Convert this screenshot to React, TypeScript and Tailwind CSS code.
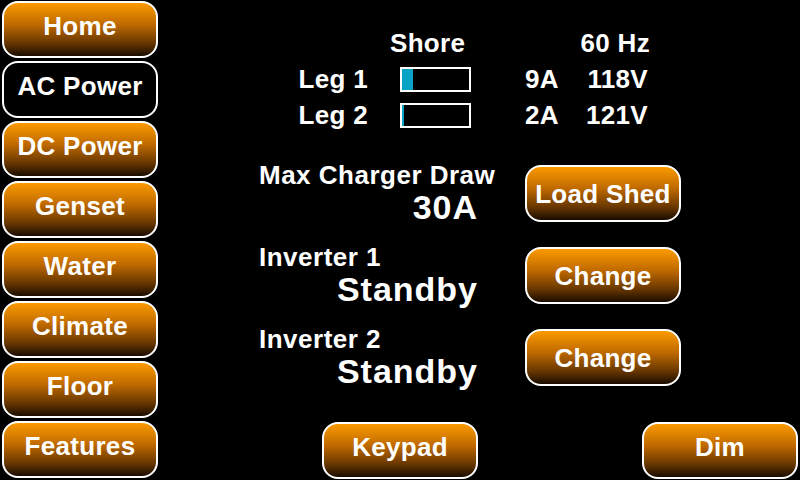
import React from 'react'

const font = { fontFamily: '"Liberation Sans", Arial, sans-serif' }

const navItems = ['Home', 'AC Power', 'DC Power', 'Genset', 'Water', 'Climate', 'Floor', 'Features']

function PillButton({ label, active = false, lift = true }: { label: string; active?: boolean; lift?: boolean }) {
  const base =
    'w-[156px] h-[57px] rounded-[16px] border-2 border-white flex items-center justify-center text-white font-bold text-[26px] tracking-[0.3px]'
  return (
    <div
      className={
        active
          ? `${base} bg-black`
          : `${base} bg-[linear-gradient(to_bottom,#fb9a00_0%,#c06a00_40%,#6a3800_75%,#1a0c00_100%)]`
      }
    >
      <span className={lift ? '-mt-[6px]' : 'mt-[2px]'}>{label}</span>
    </div>
  )
}

function LegBar({ pct }: { pct: number }) {
  return (
    <div className="ml-[32px] w-[71px] h-[25px] border-2 border-white bg-black">
      <div className="h-full bg-[#0aa3c6]" style={{ width: `${pct}%` }} />
    </div>
  )
}

function StatusRow({ label, value, action }: { label: string; value: string; action: string }) {
  return (
    <div className="flex items-center h-[57px]">
      <div className="w-[219px] flex flex-col -mt-[2px]">
        <div className="whitespace-nowrap text-[26px] font-bold tracking-[0.5px] leading-[28px]">{label}</div>
        <div className="text-right text-[34px] font-bold tracking-[1px] leading-[36px]">{value}</div>
      </div>
      <div className="ml-[47px]">
        <PillButton label={action} lift={false} />
      </div>
    </div>
  )
}

export default function App() {
  return (
    <div className="w-[800px] h-[480px] bg-black text-white flex overflow-hidden" style={font}>
      <nav className="w-[160px] flex flex-col">
        {navItems.map((item) => (
          <div key={item} className="h-[60px] px-[2px] pt-[1px]">
            <PillButton label={item} active={item === 'AC Power'} />
          </div>
        ))}
      </nav>

      <main className="flex-1 flex flex-col">
        {/* shore power readout */}
        <div className="mt-[25px] grid grid-cols-[208px_157px_45px_80px] auto-rows-[36px] items-center font-bold text-[26px] tracking-[0.3px]">
          <div />
          <div className="ml-[22px]">Shore</div>
          <div className="col-span-2 text-right">60 Hz</div>

          <div className="text-right">Leg 1</div>
          <LegBar pct={16} />
          <div>9A</div>
          <div className="text-right pr-[2px]">118V</div>

          <div className="text-right">Leg 2</div>
          <LegBar pct={3} />
          <div>2A</div>
          <div className="text-right pr-[2px]">121V</div>
        </div>

        {/* charger and inverters */}
        <div className="mt-[32px] ml-[99px] flex flex-col gap-[25px]">
          <StatusRow label="Max Charger Draw" value="30A" action="Load Shed" />
          <StatusRow label="Inverter 1" value="Standby" action="Change" />
          <StatusRow label="Inverter 2" value="Standby" action="Change" />
        </div>

        <div className="mt-auto h-[60px] pt-[2px] flex">
          <div className="ml-[162px]">
            <PillButton label="Keypad" />
          </div>
          <div className="ml-auto mr-[2px]">
            <PillButton label="Dim" />
          </div>
        </div>
      </main>
    </div>
  )
}
